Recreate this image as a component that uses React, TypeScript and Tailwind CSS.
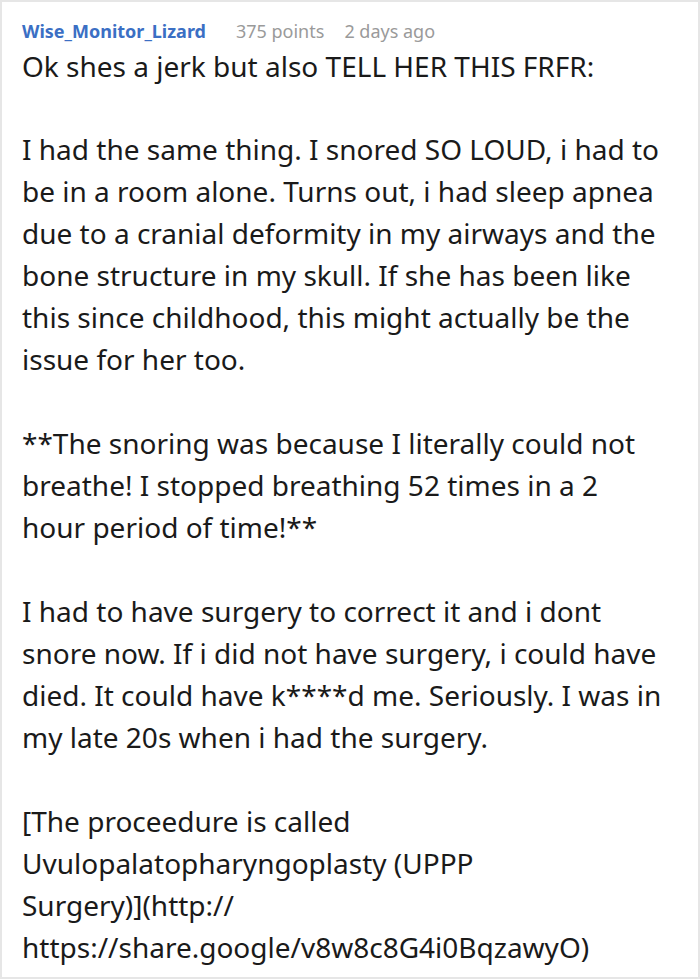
import React from "react";

export default function App() {
  const font = { fontFamily: '"Noto Sans", sans-serif' };
  return (
    <div className="w-[700px] h-[979px] bg-white border-2 border-[#e6e6e6] box-border overflow-hidden" style={font}>
      <div className="pl-[20px] pr-[33px] pt-[15px]">
        <div className="flex items-center h-[28px] text-[18px]">
          <span className="font-bold text-[#3b6fc4]">Wise_Monitor_Lizard</span>
          <span className="ml-[30px] text-[#9a9a9a]">375 points</span>
          <span className="ml-[20px] text-[#9a9a9a]">2 days ago</span>
        </div>
        <div className="text-[28px] leading-[42px] text-[#1a1a1a]">
          <p>Ok shes a jerk but also TELL HER THIS FRFR:</p>
          <p className="mt-[41px]">I had the same thing. I snored SO LOUD, i had to be in a room alone. Turns out, i had sleep apnea due to a cranial deformity in my airways and the bone structure in my skull. If she has been like this since childhood, this might actually be the issue for her too.</p>
          <p className="mt-[42px]">**The snoring was because I literally could not breathe! I stopped breathing 52 times in a 2 hour period of time!**</p>
          <p className="mt-[42px]">I had to have surgery to correct it and i dont snore now. If i did not have surgery, i could have died. It could have k****d me. Seriously. I was in my late 20s when i had the surgery.</p>
          <p className="mt-[42px]">[The proceedure is called Uvulopalatopharyngoplasty (UPPP <span className="whitespace-nowrap">Surgery)](http://</span> https://share.google/v8w8c8G4i0BqzawyO)</p>
        </div>
      </div>
    </div>
  );
}
